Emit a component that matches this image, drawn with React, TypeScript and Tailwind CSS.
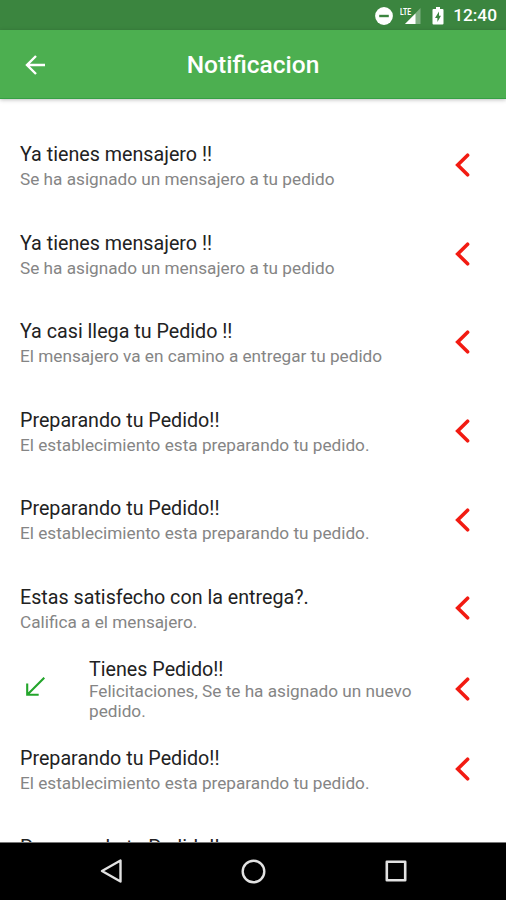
interface Notice {
  title: string;
  detail: string;
  assigned?: boolean;
}

const notices: Notice[] = [
  { title: 'Ya tienes mensajero !!', detail: 'Se ha asignado un mensajero a tu pedido' },
  { title: 'Ya tienes mensajero !!', detail: 'Se ha asignado un mensajero a tu pedido' },
  { title: 'Ya casi llega tu Pedido !!', detail: 'El mensajero va en camino a entregar tu pedido' },
  { title: 'Preparando tu Pedido!!', detail: 'El establecimiento esta preparando tu pedido.' },
  { title: 'Preparando tu Pedido!!', detail: 'El establecimiento esta preparando tu pedido.' },
  { title: 'Estas satisfecho con la entrega?.', detail: 'Califica a el mensajero.' },
  { title: 'Tienes Pedido!!', detail: 'Felicitaciones, Se te ha asignado un nuevo pedido.', assigned: true },
  { title: 'Preparando tu Pedido!!', detail: 'El establecimiento esta preparando tu pedido.' },
  { title: 'Preparando tu Pedido!!', detail: 'El establecimiento esta preparando tu pedido.' },
];

function StatusBar() {
  return (
    <div className="flex h-[30px] shrink-0 items-center justify-end bg-[#3b853f] pt-0.5 pr-[9px] text-white">
      <svg className="mr-[7px] h-[18px] w-[18px]" viewBox="0 0 18 18">
        <circle cx="9" cy="9" r="8.9" fill="currentColor" />
        <path d="M4.2 9h9.6" stroke="#3b853f" strokeWidth="2.4" />
      </svg>
      <svg className="mr-[11px] h-[20px] w-[21px]" viewBox="0 0 21 20">
        <path d="M20.5 2v16H5z" fill="#fff" opacity="0.35" />
        <path d="M15.5 7.5V18H5z" fill="#fff" />
        <text x="0" y="8.5" fill="#fff" fontSize="9" fontWeight="700" textLength="11" lengthAdjust="spacingAndGlyphs" fontFamily="Roboto, sans-serif">
          LTE
        </text>
      </svg>
      <svg className="mr-[9px] h-[18px] w-3" viewBox="0 0 12 18">
        <path d="M4 0h4v2h2.5q1 0 1 1v13.5q0 1-1 1h-9q-1 0-1-1V3q0-1 1-1H4z" fill="currentColor" />
        <path d="M7 4.5 3 11h2.4v4L9 8.7H7z" fill="#3b853f" />
      </svg>
      <span className="text-[17.3px] leading-none font-medium">12:40</span>
    </div>
  );
}

function Header() {
  return (
    <header className="relative z-10 grid h-[69px] shrink-0 grid-cols-[1fr_auto_1fr] items-center border-b border-[#35a044] bg-[#4caf50] text-white shadow-[0_1px_4px_rgba(0,0,0,0.25)]">
      <svg className="mt-px ml-[25px] h-5 w-5" viewBox="0 0 20 20" fill="none" stroke="currentColor" strokeWidth="2.4">
        <path d="M20 10H2.2M11 1 2 10l9 9" />
      </svg>
      <h1 className="pt-[3px] text-[24.5px] font-medium">Notificacion</h1>
    </header>
  );
}

function NoticeRow({ title, detail, assigned }: Notice) {
  return (
    <li className={assigned ? 'flex h-[72.6px] items-center' : 'flex h-[88.6px] items-center'}>
      {assigned && (
        <svg className="mr-[44px] ml-[6px] h-[19px] w-[19px] shrink-0 -translate-y-0.5" viewBox="0 0 19 19" fill="none" stroke="#23a52b" strokeWidth="2.1">
          <path d="M18.3.7 1.3 17.7M1.2 6.5v11.3h11.5" />
        </svg>
      )}
      <div className={assigned ? 'w-[340px] pt-[1.5px]' : 'w-[409px] pt-[1.5px]'}>
        <p className={assigned ? 'text-[19.7px] leading-[23px] text-[#222]' : 'mb-[3px] text-[19.7px] leading-[23px] text-[#222]'}>{title}</p>
        <p className="text-[17.2px] leading-[20px] text-[#858585]">{detail}</p>
      </div>
      <svg className="ml-auto h-6 w-[15px] shrink-0" viewBox="0 0 15 24" fill="none" stroke="#f21b12" strokeWidth="3.6" strokeLinecap="round">
        <path d="M12.6 2.2 2.7 12l9.9 9.8" />
      </svg>
    </li>
  );
}

function NavigationBar() {
  return (
    <nav className="flex h-[58px] shrink-0 items-center border-t border-[#777] bg-black pl-[100px] text-[#e2e2e2]">
      <svg className="-mt-0.5 h-6 w-6" viewBox="0 0 24 24" fill="none" stroke="currentColor" strokeWidth="2.4" strokeLinejoin="round">
        <path d="M20.5 1.5v21L2 12z" />
      </svg>
      <svg className="-mt-px ml-[117px] h-[25px] w-[25px]" viewBox="0 0 25 25" fill="none" stroke="currentColor" strokeWidth="2.4">
        <circle cx="12.5" cy="12.5" r="10.8" />
      </svg>
      <svg className="-mt-0.5 ml-[119px] h-[22px] w-[22px]" viewBox="0 0 22 22" fill="none" stroke="currentColor" strokeWidth="2.6" strokeLinejoin="round">
        <rect x="1.8" y="1.8" width="18.4" height="18.4" />
      </svg>
    </nav>
  );
}

export default function App() {
  return (
    <div className="flex h-[900px] w-[506px] flex-col overflow-hidden bg-white font-['Roboto',sans-serif]">
      <StatusBar />
      <Header />
      <main className="min-h-0 flex-1 overflow-hidden pt-[22px]">
        <ul className="pr-[36px] pl-5">
          {notices.map((notice, index) => (
            <NoticeRow key={index} {...notice} />
          ))}
        </ul>
      </main>
      <NavigationBar />
    </div>
  );
}
